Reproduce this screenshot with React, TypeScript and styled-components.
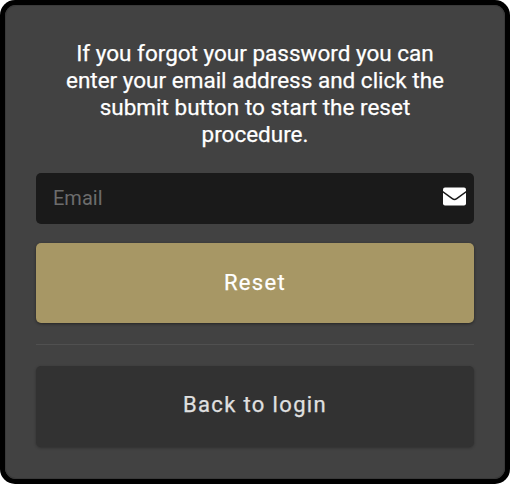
import React from "react";
import styled, { createGlobalStyle } from "styled-components";

const GlobalStyle = createGlobalStyle`
  *, *::before, *::after { box-sizing: border-box; }
  body { margin: 0; background: #fff; font-family: Roboto, sans-serif; }
`;

const Card = styled.main`
  width: 510px;
  height: 484px;
  padding: 5px;
  border-radius: 15px;
  background: #000;
  display: flex;
`;

const Panel = styled.form`
  flex: 1;
  display: flex;
  flex-direction: column;
  padding: 35px 31px 0;
  border-radius: 11px;
  background: #424242;
  box-shadow: inset 0 0 0 1px #393939;
`;

const Message = styled.p`
  margin: 0 auto;
  width: 390px;
  color: #fff;
  font-size: 22.5px;
  line-height: 27px;
  text-align: center;
  -webkit-text-stroke: 0.25px currentColor;
`;

const Field = styled.label`
  display: flex;
  align-items: center;
  height: 51px;
  margin-top: 25px;
  padding: 0 8px 0 17px;
  border-radius: 5px;
  background: #1a1a1a;
`;

const Input = styled.input`
  flex: 1;
  min-width: 0;
  height: 49px;
  padding: 0;
  border: 0;
  outline: 0;
  background: transparent;
  color: #fff;
  font: 20px Roboto, sans-serif;
  margin-bottom: 2px;
  &::placeholder { color: #6c6c6c; opacity: 1; }
`;

const Button = styled.button<{ $primary?: boolean }>`
  height: ${(p) => (p.$primary ? 80 : 81)}px;
  padding: 0 0 ${(p) => (p.$primary ? 2 : 4)}px;
  border: 0;
  border-radius: 5px;
  background: ${(p) => (p.$primary ? "#a79765" : "#323232")};
  color: ${(p) => (p.$primary ? "#fff" : "#e0e0e0")};
  font: 400 22px Roboto, sans-serif;
  letter-spacing: 1.35px;
  -webkit-text-stroke: 0.25px currentColor;
  box-shadow: 0 1px 3px rgba(0, 0, 0, ${(p) => (p.$primary ? 0.45 : 0.3)});
  margin-top: ${(p) => (p.$primary ? 19 : 0)}px;
`;

const Divider = styled.hr`
  width: 100%;
  height: 1px;
  margin: 21px 0;
  border: 0;
  background: #505050;
`;

const EnvelopeIcon = styled.svg`
  flex: none;
  margin-bottom: 4px;
`;

const Envelope = () => (
  <EnvelopeIcon width="23" height="19" viewBox="0 0 23 19" aria-hidden="true">
    <rect y="0.4" width="23" height="18.2" rx="2" fill="#fff" />
    <path d="M-.5 4.500 9.300 11.700Q11.500 13.400 13.700 11.700L23.500 4.500" fill="none" stroke="#1a1a1a" strokeWidth="1.5" />
  </EnvelopeIcon>
);

export default function App() {
  return (
    <>
      <GlobalStyle />
      <Card>
        <Panel>
          <Message>
            If you forgot your password you can enter your email address and click the submit button to start the reset procedure.
          </Message>
          <Field>
            <Input type="email" placeholder="Email" aria-label="Email" />
            <Envelope />
          </Field>
          <Button type="button" $primary>Reset</Button>
          <Divider />
          <Button type="button">Back to login</Button>
        </Panel>
      </Card>
    </>
  );
}
